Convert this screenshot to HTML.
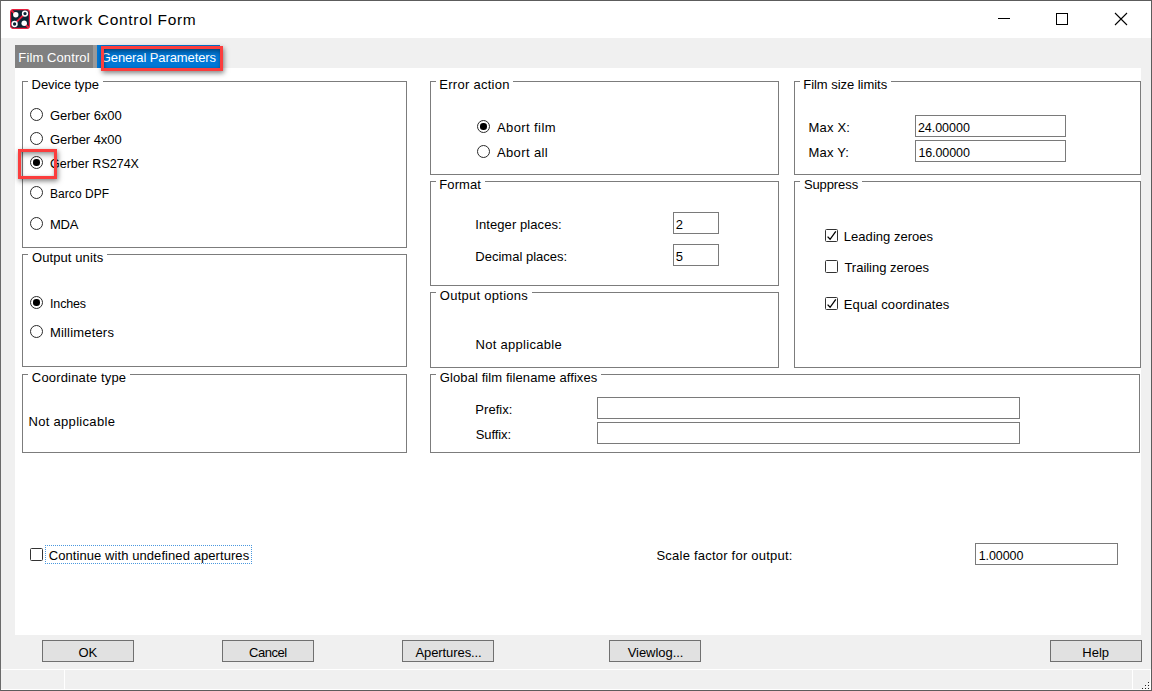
<!DOCTYPE html>
<html lang="en"><head><meta charset="utf-8"><title>Artwork Control Form</title>
<style>
html,body{margin:0;padding:0}
body{width:1152px;height:691px;overflow:hidden;background:#f0f0f0;font-family:"Liberation Sans",Arial,sans-serif;font-size:13px;color:#000}
#win{position:absolute;left:0;top:0;width:1150px;height:689px;border:1px solid #5c5c5c;border-left-color:#6a6a6a;background:#f0f0f0;overflow:hidden}
#win *{position:absolute;box-sizing:border-box}
#root{left:-1px;top:-1px;width:1152px;height:691px}
.t{white-space:nowrap;line-height:16px;font-size:13px}
#titlebar{left:1px;top:1px;width:1150px;height:37px;background:#fff}
#panel{left:15px;top:68px;width:1126px;height:567px;background:#fff}
.tab1{left:15px;top:45px;width:78px;height:23px;background:#808080}
.tabgap{left:93px;top:45px;width:4px;height:23px;background:#9a9a9a}
.tab2{left:97px;top:45px;width:123px;height:23px;background:#0078d7}
.gb{border:1px solid #7c7c7c}
.lgbg{background:#fff;height:3px}
.rad{width:13px;height:13px;border:1px solid #2a2a2a;border-radius:50%;background:#fff}
.rad.on::after{content:"";position:absolute;left:2.3px;top:2.3px;width:6.4px;height:6.4px;border-radius:50%;background:#000}
.chk{width:13px;height:13px;border:1px solid #333;background:#fff;border-radius:1.5px}
.chk svg{left:0;top:0;width:11px;height:11px}
.ed{height:22px;border:1px solid #7a7a7a;background:#fff}
.btn{top:640px;width:92px;height:22px;border:1px solid #707070;background:#e1e1e1;margin:0;padding:0;border-radius:0;font:inherit;color:inherit;text-align:left;overflow:visible}
.hl{border:3px solid #fb3d3d;box-shadow:1px 2px 5px rgba(0,0,0,.5), inset 0 4px 5px -1px rgba(0,0,0,.34), inset 1px 0 3px rgba(0,0,0,.22)}
.focus{left:45px;top:545px;width:207px;height:19px;
 background:
  repeating-linear-gradient(90deg,#4a98de 0 1px,transparent 1px 2px) 0 0/100% 1px no-repeat,
  repeating-linear-gradient(90deg,#4a98de 0 1px,transparent 1px 2px) 0 100%/100% 1px no-repeat,
  repeating-linear-gradient(0deg,#4a98de 0 1px,transparent 1px 2px) 0 0/1px 100% no-repeat,
  repeating-linear-gradient(0deg,#4a98de 0 1px,transparent 1px 2px) 100% 0/1px 100% no-repeat}
.sb{background:#fff}
</style></head><body>
<div id="win"><div id="root">

<div id="titlebar"></div>
<svg style="left:10px;top:9px;width:20px;height:20px" viewBox="0 0 20 20">
<rect x="0.6" y="0.6" width="18.8" height="18.8" rx="2.6" fill="#0b2534" stroke="#e8213f" stroke-width="1.2"/>
<path d="M1.2 1.2 L4.5 4.5 M15.5 15.5 L18.8 18.8 M6.3 13.2 L13.2 6.3" stroke="#e8213f" stroke-width="1.9" stroke-linecap="butt"/>
<circle cx="5.8" cy="5.8" r="2.7" fill="#fff"/><circle cx="14.2" cy="14.2" r="2.7" fill="#fff"/>
<circle cx="15" cy="4.6" r="2.4" fill="#0b2534" stroke="#fff" stroke-width="1.5"/>
<circle cx="4.6" cy="15" r="2.4" fill="#0b2534" stroke="#fff" stroke-width="1.5"/>
</svg>
<span class="t" style="left:35.60px;top:9.5px;letter-spacing:0.679px;font-size:15.5px;line-height:20px;">Artwork Control Form</span>
<svg style="left:990px;top:1px;width:160px;height:37px" viewBox="0 0 160 37" shape-rendering="crispEdges">
<path d="M8 17.5 H20" stroke="#000" stroke-width="1" fill="none"/>
<rect x="66.5" y="12.5" width="11" height="11" stroke="#000" stroke-width="1" fill="none"/>
<path d="M125 12 L137 24 M137 12 L125 24" stroke="#000" stroke-width="1.1" fill="none" shape-rendering="geometricPrecision"/>
</svg>
<div class="tab1"></div><div class="tabgap"></div><div class="tab2"></div>
<div id="panel"></div>
<span class="t" style="left:18.36px;top:49.5px;letter-spacing:0.103px;color:#fff;">Film Control</span>
<span class="t" style="left:100.75px;top:49.5px;letter-spacing:-0.107px;color:#fff;">General Parameters</span>
<div role="group" class="gb" style="left:22px;top:81px;width:385px;height:167px"></div>
<div class="lgbg" style="left:28px;top:80px;width:75px"></div>
<span class="t" style="left:31.56px;top:76.5px;letter-spacing:-0.051px;">Device type</span>
<div role="group" class="gb" style="left:22px;top:254px;width:385px;height:113px"></div>
<div class="lgbg" style="left:28px;top:253px;width:79px"></div>
<span class="t" style="left:31.98px;top:249.5px;letter-spacing:0.097px;">Output units</span>
<div role="group" class="gb" style="left:22px;top:374px;width:385px;height:79px"></div>
<div class="lgbg" style="left:28px;top:373px;width:102px"></div>
<span class="t" style="left:31.85px;top:369.5px;letter-spacing:0.174px;">Coordinate type</span>
<div role="group" class="gb" style="left:430px;top:81px;width:349px;height:94px"></div>
<div class="lgbg" style="left:436px;top:80px;width:77px"></div>
<span class="t" style="left:439.26px;top:76.5px;letter-spacing:0.275px;">Error action</span>
<div role="group" class="gb" style="left:430px;top:181px;width:349px;height:105px"></div>
<div class="lgbg" style="left:436px;top:180px;width:49px"></div>
<span class="t" style="left:439.26px;top:176.5px;letter-spacing:0.108px;">Format</span>
<div role="group" class="gb" style="left:430px;top:292px;width:349px;height:76px"></div>
<div class="lgbg" style="left:436px;top:291px;width:96px"></div>
<span class="t" style="left:439.78px;top:287.5px;letter-spacing:0.273px;">Output options</span>
<div role="group" class="gb" style="left:430px;top:374px;width:710px;height:79px"></div>
<div class="lgbg" style="left:436px;top:373px;width:165px"></div>
<span class="t" style="left:439.85px;top:369.5px;letter-spacing:0.086px;">Global film filename affixes</span>
<div role="group" class="gb" style="left:794px;top:81px;width:347px;height:94px"></div>
<div class="lgbg" style="left:800px;top:80px;width:91px"></div>
<span class="t" style="left:803.26px;top:76.5px;letter-spacing:-0.041px;">Film size limits</span>
<div role="group" class="gb" style="left:794px;top:181px;width:347px;height:187px"></div>
<div class="lgbg" style="left:800px;top:180px;width:62px"></div>
<span class="t" style="left:803.88px;top:176.5px;letter-spacing:-0.094px;">Suppress</span>
<div role="radio" aria-checked="false" class="rad" style="left:30px;top:108px"></div>
<span class="t" style="left:49.95px;top:107.5px;letter-spacing:-0.049px;">Gerber 6x00</span>
<div role="radio" aria-checked="false" class="rad" style="left:30px;top:132px"></div>
<span class="t" style="left:49.95px;top:131.5px;letter-spacing:-0.049px;">Gerber 4x00</span>
<div role="radio" aria-checked="true" class="rad on" style="left:30px;top:156px"></div>
<span class="t" style="left:49.98px;top:156.0px;letter-spacing:0.004px;font-size:12.5px;line-height:16px;">Gerber RS274X</span>
<div role="radio" aria-checked="false" class="rad" style="left:30px;top:186px"></div>
<span class="t" style="left:50.04px;top:186.0px;letter-spacing:0.050px;font-size:12px;line-height:16px;">Barco DPF</span>
<div role="radio" aria-checked="false" class="rad" style="left:30px;top:217px"></div>
<span class="t" style="left:49.96px;top:216.5px;letter-spacing:-0.194px;">MDA</span>
<div role="radio" aria-checked="true" class="rad on" style="left:30px;top:296px"></div>
<span class="t" style="left:50.08px;top:296.0px;letter-spacing:-0.186px;font-size:12.5px;line-height:16px;">Inches</span>
<div role="radio" aria-checked="false" class="rad" style="left:30px;top:325px"></div>
<span class="t" style="left:49.96px;top:324.5px;letter-spacing:0.182px;">Millimeters</span>
<div role="radio" aria-checked="true" class="rad on" style="left:477px;top:120px"></div>
<span class="t" style="left:496.90px;top:119.5px;letter-spacing:0.419px;">Abort film</span>
<div role="radio" aria-checked="false" class="rad" style="left:477px;top:145px"></div>
<span class="t" style="left:496.90px;top:144.5px;letter-spacing:0.390px;">Abort all</span>
<div role="checkbox" aria-checked="true" class="chk" style="left:825px;top:229px"><svg viewBox="0 0 11 11"><path d="M1.6 6.6 L4.1 9.3 L9.8 1.3" stroke="#000" stroke-width="1.3" fill="none"/></svg></div>
<span class="t" style="left:843.86px;top:228.5px;letter-spacing:0.025px;">Leading zeroes</span>
<div role="checkbox" aria-checked="false" class="chk" style="left:825px;top:260px"></div>
<span class="t" style="left:844.44px;top:259.5px;letter-spacing:-0.023px;">Trailing zeroes</span>
<div role="checkbox" aria-checked="true" class="chk" style="left:825px;top:297px"><svg viewBox="0 0 11 11"><path d="M1.6 6.6 L4.1 9.3 L9.8 1.3" stroke="#000" stroke-width="1.3" fill="none"/></svg></div>
<span class="t" style="left:843.86px;top:296.5px;letter-spacing:0.085px;">Equal coordinates</span>
<div role="checkbox" aria-checked="false" class="chk" style="left:30px;top:548px"></div>
<span class="t" style="left:48.75px;top:547.5px;letter-spacing:0.074px;">Continue with undefined apertures</span>
<div class="focus"></div>
<span class="t" style="left:28.46px;top:413.5px;letter-spacing:0.310px;">Not applicable</span>
<span class="t" style="left:475.23px;top:216.5px;letter-spacing:0.088px;">Integer places:</span>
<span class="t" style="left:475.36px;top:248.5px;letter-spacing:0.002px;">Decimal places:</span>
<span class="t" style="left:475.46px;top:336.5px;letter-spacing:0.298px;">Not applicable</span>
<span class="t" style="left:475.36px;top:401.5px;letter-spacing:0.032px;">Prefix:</span>
<span class="t" style="left:475.73px;top:426.5px;letter-spacing:-0.080px;">Suffix:</span>
<span class="t" style="left:808.56px;top:119.5px;letter-spacing:0.176px;">Max X:</span>
<span class="t" style="left:808.56px;top:144.5px;letter-spacing:0.169px;">Max Y:</span>
<span class="t" style="left:656.48px;top:547.5px;letter-spacing:0.223px;">Scale factor for output:</span>
<div role="textbox" class="ed" style="left:915px;top:115px;width:151px"></div>
<span class="t" style="left:917.88px;top:120.0px;letter-spacing:-0.023px;font-size:12.5px;line-height:16px;">24.00000</span>
<div role="textbox" class="ed" style="left:915px;top:140px;width:151px"></div>
<span class="t" style="left:918.42px;top:145.0px;letter-spacing:-0.101px;font-size:12.5px;line-height:16px;">16.00000</span>
<div role="textbox" class="ed" style="left:673px;top:212px;width:46px"></div>
<span class="t" style="left:675.65px;top:216.5px;letter-spacing:0.000px;">2</span>
<div role="textbox" class="ed" style="left:673px;top:244px;width:46px"></div>
<span class="t" style="left:675.78px;top:248.5px;letter-spacing:0.000px;">5</span>
<div role="textbox" class="ed" style="left:597px;top:397px;width:423px"></div>
<div role="textbox" class="ed" style="left:597px;top:422px;width:423px"></div>
<div role="textbox" class="ed" style="left:975px;top:543px;width:143px"></div>
<span class="t" style="left:978.73px;top:548.0px;letter-spacing:-0.076px;font-size:12.5px;line-height:16px;">1.00000</span>
<button type="button" class="btn" style="left:42px"><span class="t" style="left:35.39px;top:3.5px;letter-spacing:0.000px;">OK</span></button>
<button type="button" class="btn" style="left:222px"><span class="t" style="left:26.10px;top:3.5px;letter-spacing:-0.502px;">Cancel</span></button>
<button type="button" class="btn" style="left:402px"><span class="t" style="left:12.40px;top:3.5px;letter-spacing:-0.078px;">Apertures...</span></button>
<button type="button" class="btn" style="left:609px"><span class="t" style="left:17.70px;top:3.5px;letter-spacing:-0.043px;">Viewlog...</span></button>
<button type="button" class="btn" style="left:1050px"><span class="t" style="left:31.35px;top:3.5px;letter-spacing:0.000px;">Help</span></button>
<div class="hl" style="left:101px;top:46px;width:122px;height:25px"></div>
<div class="hl" style="left:18px;top:149px;width:39px;height:30px"></div>
<div class="sb" style="left:1px;top:669px;width:1150px;height:1px"></div>
<div class="sb" style="left:64px;top:670px;width:1px;height:20px"></div>
<div class="sb" style="left:1132px;top:670px;width:1px;height:20px"></div>
<div class="sb" style="left:1150px;top:669px;width:1px;height:21px"></div>
<div class="sb" style="left:1px;top:689px;width:1150px;height:1px"></div>
<svg style="left:1140px;top:680px;width:10px;height:10px" viewBox="0 0 10 10" shape-rendering="crispEdges"><rect x="9" y="3" width="1" height="1" fill="#fff"/><rect x="8" y="2" width="1" height="1" fill="#222"/><rect x="6" y="6" width="1" height="1" fill="#fff"/><rect x="5" y="5" width="1" height="1" fill="#222"/><rect x="9" y="6" width="1" height="1" fill="#fff"/><rect x="8" y="5" width="1" height="1" fill="#222"/><rect x="3" y="9" width="1" height="1" fill="#fff"/><rect x="2" y="8" width="1" height="1" fill="#222"/><rect x="6" y="9" width="1" height="1" fill="#fff"/><rect x="5" y="8" width="1" height="1" fill="#222"/><rect x="9" y="9" width="1" height="1" fill="#fff"/><rect x="8" y="8" width="1" height="1" fill="#222"/></svg>
</div></div></body></html>
